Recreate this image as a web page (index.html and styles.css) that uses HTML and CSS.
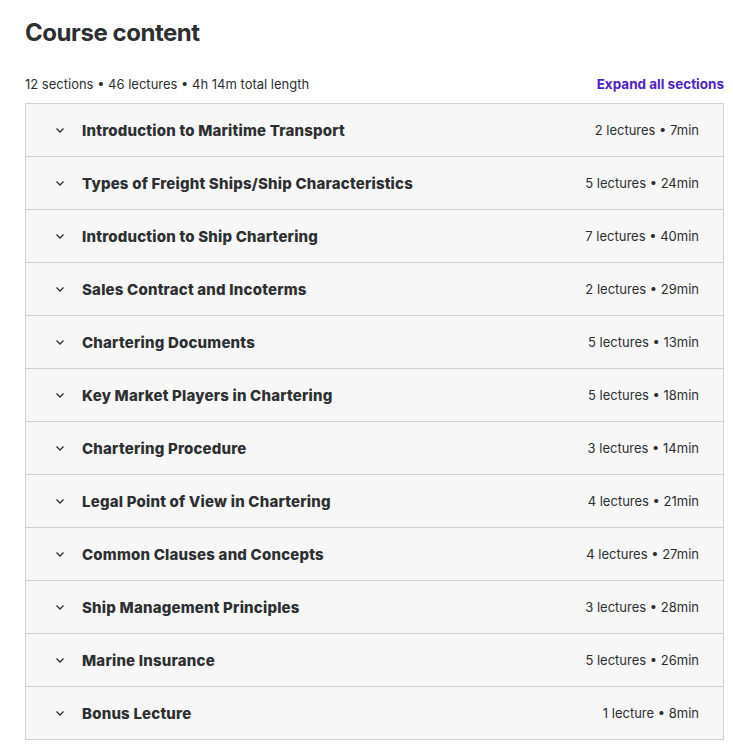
FILE: index.html
```html
<!DOCTYPE html>
<html lang="en">
<head>
    <meta charset="UTF-8">
    <meta name="viewport" content="width=device-width, initial-scale=1.0">
    <title>Course content</title>
    <link rel="stylesheet" href="styles.css">
</head>
<body>

    <div class="course">
        <h2 class="title">Course content</h2>

        <div class="summary">
            <span>12 sections • 46 lectures • 4h 14m total length</span>
            <button type="button" class="expand">Expand all sections</button>
        </div>

        <div class="sections">
            <div class="section">
                <span class="chevron"><svg width="12" height="12" viewBox="0 0 12 12"><path d="M2.5 4.5L6 8l3.5-3.5" fill="none" stroke="#2d2f31" stroke-width="1.3"/></svg></span>
                <span class="name">Introduction to Maritime Transport</span>
                <span class="meta">2 lectures • 7min</span>
            </div>
            <div class="section">
                <span class="chevron"><svg width="12" height="12" viewBox="0 0 12 12"><path d="M2.5 4.5L6 8l3.5-3.5" fill="none" stroke="#2d2f31" stroke-width="1.3"/></svg></span>
                <span class="name">Types of Freight Ships/Ship Characteristics</span>
                <span class="meta">5 lectures • 24min</span>
            </div>
            <div class="section">
                <span class="chevron"><svg width="12" height="12" viewBox="0 0 12 12"><path d="M2.5 4.5L6 8l3.5-3.5" fill="none" stroke="#2d2f31" stroke-width="1.3"/></svg></span>
                <span class="name">Introduction to Ship Chartering</span>
                <span class="meta">7 lectures • 40min</span>
            </div>
            <div class="section">
                <span class="chevron"><svg width="12" height="12" viewBox="0 0 12 12"><path d="M2.5 4.5L6 8l3.5-3.5" fill="none" stroke="#2d2f31" stroke-width="1.3"/></svg></span>
                <span class="name">Sales Contract and Incoterms</span>
                <span class="meta">2 lectures • 29min</span>
            </div>
            <div class="section">
                <span class="chevron"><svg width="12" height="12" viewBox="0 0 12 12"><path d="M2.5 4.5L6 8l3.5-3.5" fill="none" stroke="#2d2f31" stroke-width="1.3"/></svg></span>
                <span class="name">Chartering Documents</span>
                <span class="meta">5 lectures • 13min</span>
            </div>
            <div class="section">
                <span class="chevron"><svg width="12" height="12" viewBox="0 0 12 12"><path d="M2.5 4.5L6 8l3.5-3.5" fill="none" stroke="#2d2f31" stroke-width="1.3"/></svg></span>
                <span class="name">Key Market Players in Chartering</span>
                <span class="meta">5 lectures • 18min</span>
            </div>
            <div class="section">
                <span class="chevron"><svg width="12" height="12" viewBox="0 0 12 12"><path d="M2.5 4.5L6 8l3.5-3.5" fill="none" stroke="#2d2f31" stroke-width="1.3"/></svg></span>
                <span class="name">Chartering Procedure</span>
                <span class="meta">3 lectures • 14min</span>
            </div>
            <div class="section">
                <span class="chevron"><svg width="12" height="12" viewBox="0 0 12 12"><path d="M2.5 4.5L6 8l3.5-3.5" fill="none" stroke="#2d2f31" stroke-width="1.3"/></svg></span>
                <span class="name">Legal Point of View in Chartering</span>
                <span class="meta">4 lectures • 21min</span>
            </div>
            <div class="section">
                <span class="chevron"><svg width="12" height="12" viewBox="0 0 12 12"><path d="M2.5 4.5L6 8l3.5-3.5" fill="none" stroke="#2d2f31" stroke-width="1.3"/></svg></span>
                <span class="name">Common Clauses and Concepts</span>
                <span class="meta">4 lectures • 27min</span>
            </div>
            <div class="section">
                <span class="chevron"><svg width="12" height="12" viewBox="0 0 12 12"><path d="M2.5 4.5L6 8l3.5-3.5" fill="none" stroke="#2d2f31" stroke-width="1.3"/></svg></span>
                <span class="name">Ship Management Principles</span>
                <span class="meta">3 lectures • 28min</span>
            </div>
            <div class="section">
                <span class="chevron"><svg width="12" height="12" viewBox="0 0 12 12"><path d="M2.5 4.5L6 8l3.5-3.5" fill="none" stroke="#2d2f31" stroke-width="1.3"/></svg></span>
                <span class="name">Marine Insurance</span>
                <span class="meta">5 lectures • 26min</span>
            </div>
            <div class="section">
                <span class="chevron"><svg width="12" height="12" viewBox="0 0 12 12"><path d="M2.5 4.5L6 8l3.5-3.5" fill="none" stroke="#2d2f31" stroke-width="1.3"/></svg></span>
                <span class="name">Bonus Lecture</span>
                <span class="meta">1 lecture • 8min</span>
            </div>
        </div>
    </div>

</body>
</html>
```

FILE: styles.css
```css
body {
    font-family: Inter, "Noto Sans", sans-serif;
    color: #2d2f31;
    margin: 0;
    background: #fff;
}

.course {
    width: 699px;
    margin-left: 25px;
    padding-top: 18px;
}

.title {
    font-size: 24px;
    font-weight: 700;
    line-height: 30px;
    margin: 0 0 26px 0;
    letter-spacing: -0.45px;
}

.summary {
    display: flex;
    justify-content: space-between;
    align-items: center;
    font-size: 13px;
    line-height: 20px;
    margin-bottom: 9px;
}

.expand {
    background: none;
    border: none;
    padding: 0;
    font-family: inherit;
    font-size: 13.5px;
    font-weight: 700;
    color: #5022c3;
    cursor: pointer;
}

.sections {
    border: 1px solid #d1d1d1;
    border-bottom: none;
}

.section {
    display: flex;
    align-items: center;
    height: 52px;
    padding: 0 24px 0 28px;
    background: #f7f7f7;
    border-bottom: 1px solid #d1d1d1;
    box-sizing: content-box;
}

.chevron {
    display: flex;
    width: 12px;
    margin-right: 16px;
}

.name {
    flex: 1;
    font-size: 15px;
    font-weight: 800;
    letter-spacing: 0.2px;
}

.meta {
    font-size: 13px;
}
```
